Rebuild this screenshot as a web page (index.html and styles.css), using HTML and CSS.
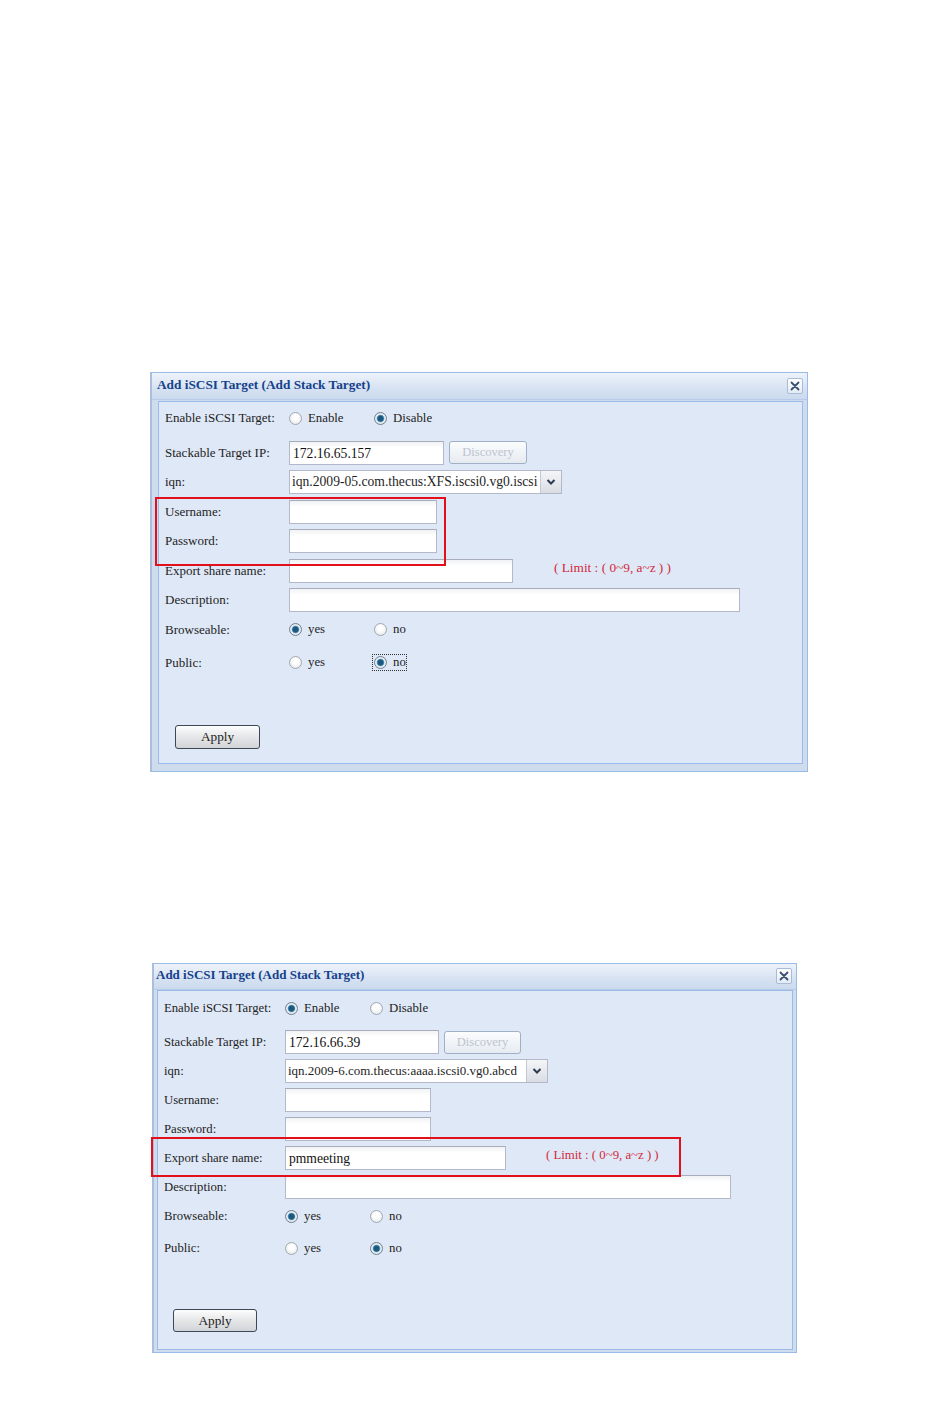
FILE: index.html
```html
<!DOCTYPE html>
<html lang="en">

<head>
    <meta charset="UTF-8">
    <title>Add iSCSI Target (Add Stack Target)</title>
    <link rel="stylesheet" href="styles.css">
</head>

<body>
    <div class="page">

        <!-- first capture: target disabled, credentials highlighted -->
        <section class="dialog dialog-a">
            <header class="dialog-title">
                <span>Add iSCSI Target (Add Stack Target)</span>
                <button class="close-btn" type="button" aria-label="close">
                    <svg width="12" height="12" viewBox="0 0 12 12"><path d="M2.5 2.5 L9.5 9.5 M9.5 2.5 L2.5 9.5" stroke="#3a4f6e" stroke-width="1.8" stroke-linecap="round"/></svg>
                </button>
            </header>
            <div class="dialog-body">
                <div class="form">
                    <div class="row row-first">
                        <label class="field-label">Enable iSCSI Target:</label>
                        <div class="radio-group">
                            <label class="radio-opt"><input type="radio" name="a-enable"> Enable</label>
                            <label class="radio-opt"><input type="radio" name="a-enable" checked> Disable</label>
                        </div>
                    </div>
                    <div class="row">
                        <label class="field-label">Stackable Target IP:</label>
                        <div class="field">
                            <input class="text-input w-ip" type="text" value="172.16.65.157">
                            <button class="discovery-btn" type="button" disabled>Discovery</button>
                        </div>
                    </div>
                    <div class="row">
                        <label class="field-label">iqn:</label>
                        <div class="field">
                            <div class="combo w-iqn">
                                <span class="combo-text">iqn.2009-05.com.thecus:XFS.iscsi0.vg0.iscsi</span>
                                <span class="combo-arrow"><svg width="10" height="8" viewBox="0 0 10 8"><path d="M1.5 2 L5 5.5 L8.5 2" fill="none" stroke="#2d3b52" stroke-width="2"/></svg></span>
                            </div>
                        </div>
                    </div>
                    <div class="row">
                        <label class="field-label">Username:</label>
                        <div class="field"><input class="text-input w-user" type="text"></div>
                    </div>
                    <div class="row">
                        <label class="field-label">Password:</label>
                        <div class="field"><input class="text-input w-user" type="password"></div>
                    </div>
                    <div class="row">
                        <label class="field-label">Export share name:</label>
                        <div class="field">
                            <input class="text-input w-share" type="text">
                            <span class="limit-note">( Limit : ( 0~9, a~z ) )</span>
                        </div>
                    </div>
                    <div class="row">
                        <label class="field-label">Description:</label>
                        <div class="field"><input class="text-input w-desc" type="text"></div>
                    </div>
                    <div class="row">
                        <label class="field-label">Browseable:</label>
                        <div class="radio-group">
                            <label class="radio-opt"><input type="radio" name="a-browse" checked> yes</label>
                            <label class="radio-opt"><input type="radio" name="a-browse"> no</label>
                        </div>
                    </div>
                    <div class="row row-last">
                        <label class="field-label">Public:</label>
                        <div class="radio-group">
                            <label class="radio-opt"><input type="radio" name="a-public"> yes</label>
                            <label class="radio-opt focused"><input type="radio" name="a-public" checked> no</label>
                        </div>
                    </div>
                </div>
                <div class="actions">
                    <button class="apply-btn" type="button">Apply</button>
                </div>
            </div>
            <div class="callout callout-a"></div>
        </section>

        <!-- second capture: target enabled, share name highlighted -->
        <section class="dialog dialog-b">
            <header class="dialog-title">
                <span>Add iSCSI Target (Add Stack Target)</span>
                <button class="close-btn" type="button" aria-label="close">
                    <svg width="12" height="12" viewBox="0 0 12 12"><path d="M2.5 2.5 L9.5 9.5 M9.5 2.5 L2.5 9.5" stroke="#3a4f6e" stroke-width="1.8" stroke-linecap="round"/></svg>
                </button>
            </header>
            <div class="dialog-body">
                <div class="form">
                    <div class="row row-first">
                        <label class="field-label">Enable iSCSI Target:</label>
                        <div class="radio-group">
                            <label class="radio-opt"><input type="radio" name="b-enable" checked> Enable</label>
                            <label class="radio-opt"><input type="radio" name="b-enable"> Disable</label>
                        </div>
                    </div>
                    <div class="row">
                        <label class="field-label">Stackable Target IP:</label>
                        <div class="field">
                            <input class="text-input w-ip" type="text" value="172.16.66.39">
                            <button class="discovery-btn" type="button" disabled>Discovery</button>
                        </div>
                    </div>
                    <div class="row">
                        <label class="field-label">iqn:</label>
                        <div class="field">
                            <div class="combo w-iqn">
                                <span class="combo-text">iqn.2009-6.com.thecus:aaaa.iscsi0.vg0.abcd</span>
                                <span class="combo-arrow"><svg width="10" height="8" viewBox="0 0 10 8"><path d="M1.5 2 L5 5.5 L8.5 2" fill="none" stroke="#2d3b52" stroke-width="2"/></svg></span>
                            </div>
                        </div>
                    </div>
                    <div class="row">
                        <label class="field-label">Username:</label>
                        <div class="field"><input class="text-input w-user" type="text"></div>
                    </div>
                    <div class="row">
                        <label class="field-label">Password:</label>
                        <div class="field"><input class="text-input w-user" type="password"></div>
                    </div>
                    <div class="row">
                        <label class="field-label">Export share name:</label>
                        <div class="field">
                            <input class="text-input w-share" type="text" value="pmmeeting">
                            <span class="limit-note">( Limit : ( 0~9, a~z ) )</span>
                        </div>
                    </div>
                    <div class="row">
                        <label class="field-label">Description:</label>
                        <div class="field"><input class="text-input w-desc" type="text"></div>
                    </div>
                    <div class="row">
                        <label class="field-label">Browseable:</label>
                        <div class="radio-group">
                            <label class="radio-opt"><input type="radio" name="b-browse" checked> yes</label>
                            <label class="radio-opt"><input type="radio" name="b-browse"> no</label>
                        </div>
                    </div>
                    <div class="row row-last">
                        <label class="field-label">Public:</label>
                        <div class="radio-group">
                            <label class="radio-opt"><input type="radio" name="b-public"> yes</label>
                            <label class="radio-opt"><input type="radio" name="b-public" checked> no</label>
                        </div>
                    </div>
                </div>
                <div class="actions">
                    <button class="apply-btn" type="button">Apply</button>
                </div>
            </div>
            <div class="callout callout-b"></div>
        </section>

    </div>
</body>

</html>
```

FILE: styles.css
```css
body {
    margin: 0;
    background: #ffffff;
    font-family: "Liberation Serif", "Times New Roman", serif;
    color: #1e1e1e;
}

.page {
    padding-top: 372px;
    padding-bottom: 60px;
}

/* ---------- dialog frame ---------- */

.dialog {
    position: relative;
    box-sizing: border-box;
    display: flex;
    flex-direction: column;
    background: #cfdcee;
    border: 1px solid #99bbe8;
    border-left: 2px solid #a9bfdc;
}

.dialog-a {
    width: 658px;
    height: 400px;
    margin-left: 150px;
    padding: 0 4px 7px 6px;
    --label-col: 124px;
    --row-h: 29.5px;
}

.dialog-b {
    width: 645px;
    height: 390px;
    margin-left: 152px;
    margin-top: 191px;
    padding: 0 3px 2px 3px;
    --label-col: 121px;
    --row-h: 29px;
}

.dialog-title {
    display: flex;
    align-items: center;
    justify-content: space-between;
    height: 25px;
    padding: 0 1px 1px 5px;
    margin: 0 -4px 0 -6px;
    background: linear-gradient(#eef3fa, #d6e2f2 60%, #cbdaee);
    border-bottom: 1px solid #b7cbe6;
    font-weight: bold;
    font-size: 13.3px;
    color: #15428b;
}

.dialog-title span {
    position: relative;
    top: -1px;
}

.dialog-b .dialog-title {
    margin: 0 -3px 0 -3px;
    padding-left: 2px;
    height: 24px;
    font-size: 13px;
}

.close-btn {
    width: 16px;
    height: 16px;
    padding: 0;
    margin-right: 3px;
    display: flex;
    align-items: center;
    justify-content: center;
    background: linear-gradient(#ffffff, #e4ebf5);
    border: 1px solid #a8bcd8;
    border-radius: 2px;
}

.dialog-body {
    flex: 1;
    margin-top: 1px;
    background: #dfe8f6;
    border: 1px solid #99bbe8;
    padding: 1px 6px 0 6px;
}

.dialog-b .dialog-body {
    margin-top: 0;
    padding-top: 2px;
}

/* ---------- form rows ---------- */

.form {
    display: flex;
    flex-direction: column;
}

.row {
    display: grid;
    grid-template-columns: var(--label-col) 1fr;
    align-items: center;
    height: var(--row-h);
}

.row-first {
    height: 30px;
    margin-bottom: 5px;
}

.dialog-b .row-first {
    margin-bottom: 4.5px;
}

.row-last {
    margin-top: 3.5px;
}

.dialog-b .row-last {
    margin-top: 3px;
}

.field-label {
    font-size: 13px;
    white-space: nowrap;
}

.dialog-b .field-label {
    font-size: 12.7px;
}

.field {
    display: flex;
    align-items: center;
}

.text-input {
    box-sizing: border-box;
    height: 24px;
    padding: 2px 3px 0;
    border: 1px solid #b5b8c8;
    border-top-color: #a9acbb;
    background: linear-gradient(#f1f2f4, #ffffff 6px);
    font-family: inherit;
    font-size: 13.6px;
    color: #111;
    outline: none;
}

.dialog-a .w-ip { width: 155px; }
.dialog-a .w-iqn { width: 273px; }
.dialog-a .w-user { width: 148px; }
.dialog-a .w-share { width: 224px; }
.dialog-a .w-desc { width: 451px; }

.dialog-b .w-ip { width: 154px; }
.dialog-b .w-iqn { width: 263px; }
.dialog-b .w-user { width: 146px; }
.dialog-b .w-share { width: 221px; }
.dialog-b .w-desc { width: 446px; }

.discovery-btn {
    box-sizing: border-box;
    width: 78px;
    height: 23px;
    margin-left: 5px;
    border: 1px solid #9fb0c7;
    border-radius: 3px;
    background: linear-gradient(#fbfcfd, #e6ebf1);
    font-family: inherit;
    font-size: 12.5px;
    color: #bcc4cf;
    padding: 0;
}

.dialog-b .discovery-btn {
    width: 77px;
}

.combo {
    box-sizing: border-box;
    display: flex;
    height: 24px;
    border: 1px solid #b5b8c8;
    background: #ffffff;
}

.combo-text {
    flex: 1;
    padding: 3px 0 0 2px;
    font-size: 13.6px;
    white-space: nowrap;
    overflow: hidden;
}

.dialog-b .combo-text {
    font-size: 13px;
}

.combo-arrow {
    width: 20px;
    display: flex;
    align-items: center;
    justify-content: center;
    border-left: 1px solid #c4c8d2;
    background: linear-gradient(#f4f5f7, #d9dde3);
}

.limit-note {
    margin-left: 41px;
    font-size: 13.3px;
    color: #d3283b;
    white-space: nowrap;
    position: relative;
    top: -3px;
}

.dialog-b .limit-note {
    margin-left: 40px;
    font-size: 12.8px;
}

/* ---------- radios ---------- */

.radio-group {
    display: flex;
    align-items: center;
}

.radio-opt {
    display: flex;
    align-items: center;
    width: 85px;
    font-size: 12.8px;
}

.radio-opt input {
    appearance: none;
    -webkit-appearance: none;
    box-sizing: border-box;
    width: 13px;
    height: 13px;
    margin: 0 6px 0 0;
    border: 1px solid #a3a9b1;
    border-radius: 50%;
    background: radial-gradient(circle at 50% 40%, #ffffff 30%, #dcdfe3 100%);
}

.radio-opt input:checked {
    border-color: #6f8193;
    background: radial-gradient(circle, #1b5a80 0 2.6px, #5f9bbf 3.4px, #e9eef3 4.2px, #d7dde3 100%);
}

.radio-opt.focused {
    width: auto;
    outline: 1px dotted #333;
    outline-offset: 0;
    margin-left: -1px;
    padding-left: 1px;
}

/* ---------- footer ---------- */

.actions {
    margin-top: 47px;
    padding-left: 10px;
}

.dialog-b .actions {
    margin-top: 46.5px;
    padding-left: 9px;
}

.apply-btn {
    box-sizing: border-box;
    width: 85px;
    height: 24px;
    border: 1px solid #3e4756;
    border-radius: 3px;
    background: linear-gradient(#fdfdfd, #e3e4e6 55%, #d2d4d8);
    font-family: inherit;
    font-size: 13.3px;
    color: #222;
    padding: 0;
}

.dialog-b .apply-btn {
    width: 84px;
    height: 23px;
}

/* ---------- annotation boxes ---------- */

.callout {
    position: absolute;
    border: 2px solid #e3101c;
    pointer-events: none;
}

.callout-a {
    left: 3px;
    top: 124px;
    width: 287px;
    height: 65px;
}

.callout-b {
    left: -3px;
    top: 173px;
    width: 526px;
    height: 36px;
}
```
